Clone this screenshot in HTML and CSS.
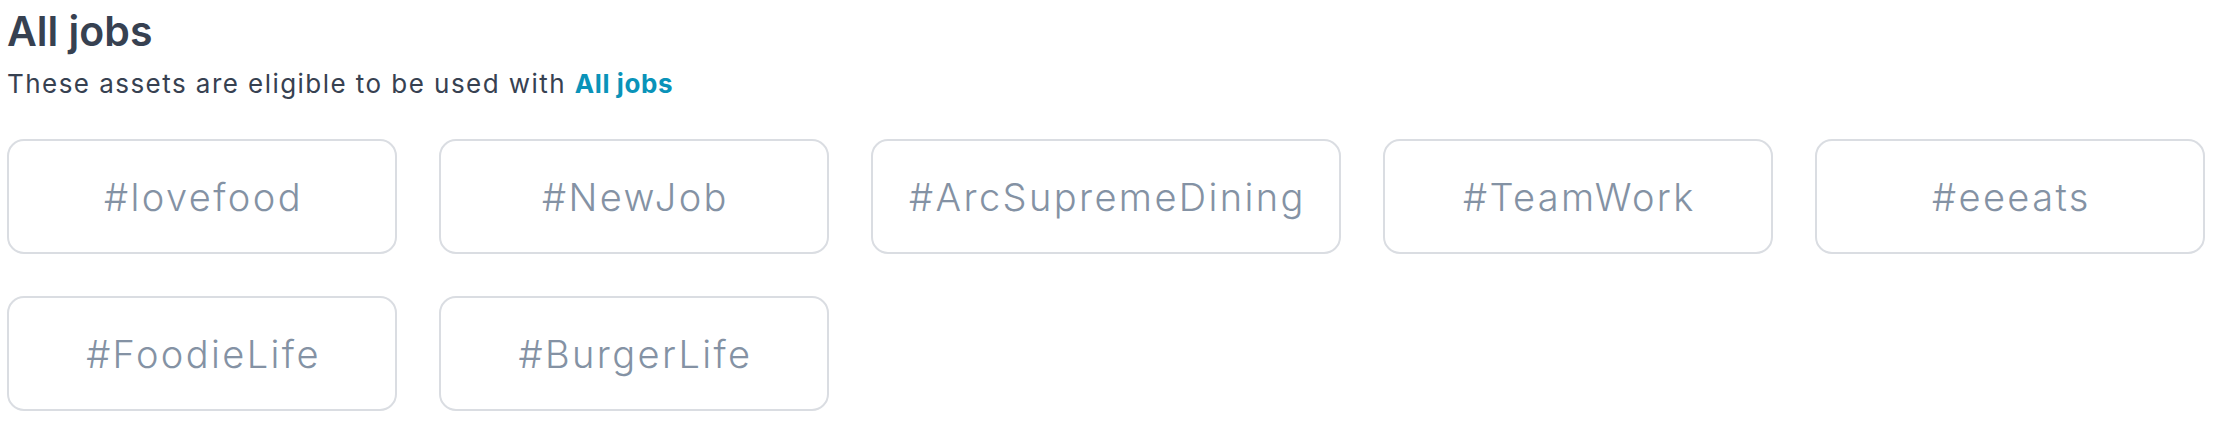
FILE: index.html
```html
<!DOCTYPE html>
<html lang="en">
<head>
<meta charset="utf-8">
<title>All jobs</title>
<link rel="stylesheet" href="styles.css">
</head>
<body>
<section class="assets">
  <h1 class="assets-title">All jobs</h1>
  <p class="assets-desc">These assets are eligible to be used with <span class="assets-link">All jobs</span></p>
  <div class="tag-list">
    <div class="tag">#lovefood</div>
    <div class="tag">#NewJob</div>
    <div class="tag">#ArcSupremeDining</div>
    <div class="tag">#TeamWork</div>
    <div class="tag">#eeeats</div>
    <div class="tag">#FoodieLife</div>
    <div class="tag">#BurgerLife</div>
  </div>
</section>
</body>
</html>
```

FILE: styles.css
```css
html, body {
  margin: 0;
  padding: 0;
  background: #ffffff;
}

body {
  font-family: "Inter", "Noto Sans", sans-serif;
  color: #374151;
}

.assets {
  padding: 0 7px;
}

.assets-title {
  margin: 0;
  font-size: 41px;
  line-height: 62px;
  font-weight: 600;
  color: #374151;
}

.assets-desc {
  margin: 4px 0 0;
  font-size: 26px;
  line-height: 36px;
  font-weight: 400;
  letter-spacing: 1.45px;
  color: #374151;
}

.assets-link {
  font-weight: 700;
  letter-spacing: 0.6px;
  color: #0a93b9;
}

.tag-list {
  margin-top: 37px;
  display: flex;
  flex-wrap: wrap;
  gap: 42px;
}

.tag {
  box-sizing: border-box;
  min-width: 390px;
  height: 115px;
  padding: 0 33px 0 36px;
  display: flex;
  align-items: center;
  justify-content: center;
  border: 2px solid #dadde2;
  border-radius: 17px;
  font-size: 38px;
  font-weight: 300;
  letter-spacing: 2.4px;
  color: #8492a4;
}
```
